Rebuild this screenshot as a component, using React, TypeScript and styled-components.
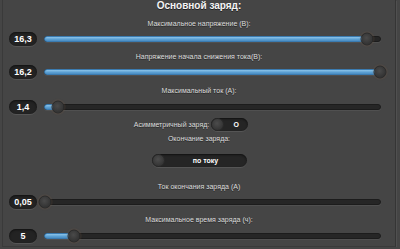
import React from "react";
import styled, { createGlobalStyle } from "styled-components";

const Global = createGlobalStyle`
  html, body { margin: 0; padding: 0; background: #454545; overflow: hidden; }
  body { font-family: "Liberation Sans", Arial, sans-serif; }
`;

const Frame = styled.div`
  box-sizing: border-box;
  margin: 0 4px 0 2px;
  height: 247px;
  border-left: 1px solid #3a3a3a;
  border-right: 1px solid #353535;
  border-bottom: 1px solid #3a3a3a;
  box-shadow: 1px 1px 0 #505050;
  display: flex;
  flex-direction: column;
  padding: 0 0 0 6px;
`;

const Title = styled.div`
  height: 12px;
  line-height: 12px;
  text-align: center;
  font-size: 10px;
  font-weight: bold;
  color: #f4f4f4;
  text-shadow: 0 1px 0 #222;
  padding-right: 6px;
`;

const Label = styled.div<{ $mt: number }>`
  margin-top: ${(p) => p.$mt}px;
  height: 10px;
  line-height: 10px;
  text-align: center;
  font-size: 7px;
  color: #dcdcdc;
  text-shadow: 0 1px 0 #2a2a2a;
  padding-right: 6px;
`;

const SliderRow = styled.div<{ $mt: number }>`
  margin-top: ${(p) => p.$mt}px;
  height: 14px;
  display: flex;
  align-items: center;
`;

const ValueBox = styled.div`
  box-sizing: border-box;
  width: 28px;
  height: 14px;
  border-radius: 7px;
  background: #232323;
  box-shadow: inset 0 1px 2px #111, 0 1px 0 #555;
  color: #fff;
  font-size: 9px;
  font-weight: bold;
  line-height: 14px;
  text-align: center;
`;

const Track = styled.div`
  position: relative;
  box-sizing: border-box;
  margin-left: 7px;
  width: 337px;
  height: 6px;
  border-radius: 3px;
  background: #262626;
  border: 1px solid #1c1c1c;
  box-shadow: 0 1px 0 #505050;
`;

const Fill = styled.div`
  position: absolute;
  left: -1px;
  top: -1px;
  bottom: -1px;
  border-radius: 3px;
  background: linear-gradient(#8cc4ea, #5a9fd2 60%, #4a8cc2);
  border: 1px solid #3b7bb0;
  box-sizing: border-box;
`;

const Thumb = styled.div`
  position: absolute;
  top: 50%;
  width: 13px;
  height: 13px;
  border-radius: 50%;
  transform: translate(-50%, -50%);
  background: radial-gradient(circle at 45% 40%, #4a4a4a, #333 70%);
  border: 1px solid #2a2a2a;
  box-shadow: 0 0 2px rgba(140, 100, 70, 0.6);
  box-sizing: border-box;
`;

const ToggleRow = styled.div`
  margin-top: 4px;
  height: 13px;
  display: flex;
  align-items: center;
  justify-content: center;
  gap: 2px;
  padding-right: 22px;
`;

const InlineLabel = styled.span`
  font-size: 7px;
  color: #dcdcdc;
  text-shadow: 0 1px 0 #2a2a2a;
`;

const Switch = styled.div<{ $w: number }>`
  position: relative;
  box-sizing: border-box;
  width: ${(p) => p.$w}px;
  height: 13px;
  border-radius: 7px;
  background: #252525;
  box-shadow: inset 0 1px 2px #111, 0 1px 0 #555;
  display: flex;
  align-items: center;
  justify-content: center;
  padding-left: 13px;
  color: #fff;
  font-size: 7px;
  font-weight: bold;
`;

const Knob = styled.div`
  position: absolute;
  left: 0;
  top: 0;
  width: 13px;
  height: 13px;
  border-radius: 50%;
  box-sizing: border-box;
  background: radial-gradient(circle at 45% 40%, #4c4c4c, #353535 70%);
  border: 1px solid #2a2a2a;
`;

const SelectRow = styled.div`
  margin-top: 10px;
  height: 14px;
  display: flex;
  justify-content: center;
  padding-right: 6px;
`;

type SliderProps = { value: string; pct: number; fill: boolean; mt: number };

const Slider = ({ value, pct, fill, mt }: SliderProps) => (
  <SliderRow $mt={mt}>
    <ValueBox>{value}</ValueBox>
    <Track>
      {fill && <Fill style={{ width: `calc(${pct}% + 2px)` }} />}
      <Thumb style={{ left: `${pct}%` }} />
    </Track>
  </SliderRow>
);

export default function App() {
  return (
    <>
      <Global />
      <Frame>
        <Title>Основной заряд:</Title>
        <Label $mt={7}>Максимальное напряжение (В):</Label>
        <Slider value="16,3" pct={96} fill mt={3} />
        <Label $mt={6}>Напряжение начала снижения тока(В):</Label>
        <Slider value="16,2" pct={100} fill mt={3} />
        <Label $mt={7}>Максимальный ток (А):</Label>
        <Slider value="1,4" pct={3.8} fill mt={4} />
        <ToggleRow>
          <InlineLabel>Асимметричный заряд:</InlineLabel>
          <Switch $w={37}>
            <Knob />O
          </Switch>
        </ToggleRow>
        <Label $mt={3}>Окончание заряда:</Label>
        <SelectRow>
          <Switch $w={95}>
            <Knob />по току
          </Switch>
        </SelectRow>
        <Label $mt={14}>Ток окончания заряда (А)</Label>
        <Slider value="0,05" pct={0} fill={false} mt={3} />
        <Label $mt={6}>Максимальное время заряда (ч):</Label>
        <Slider value="5" pct={8.6} fill mt={4} />
      </Frame>
    </>
  );
}
